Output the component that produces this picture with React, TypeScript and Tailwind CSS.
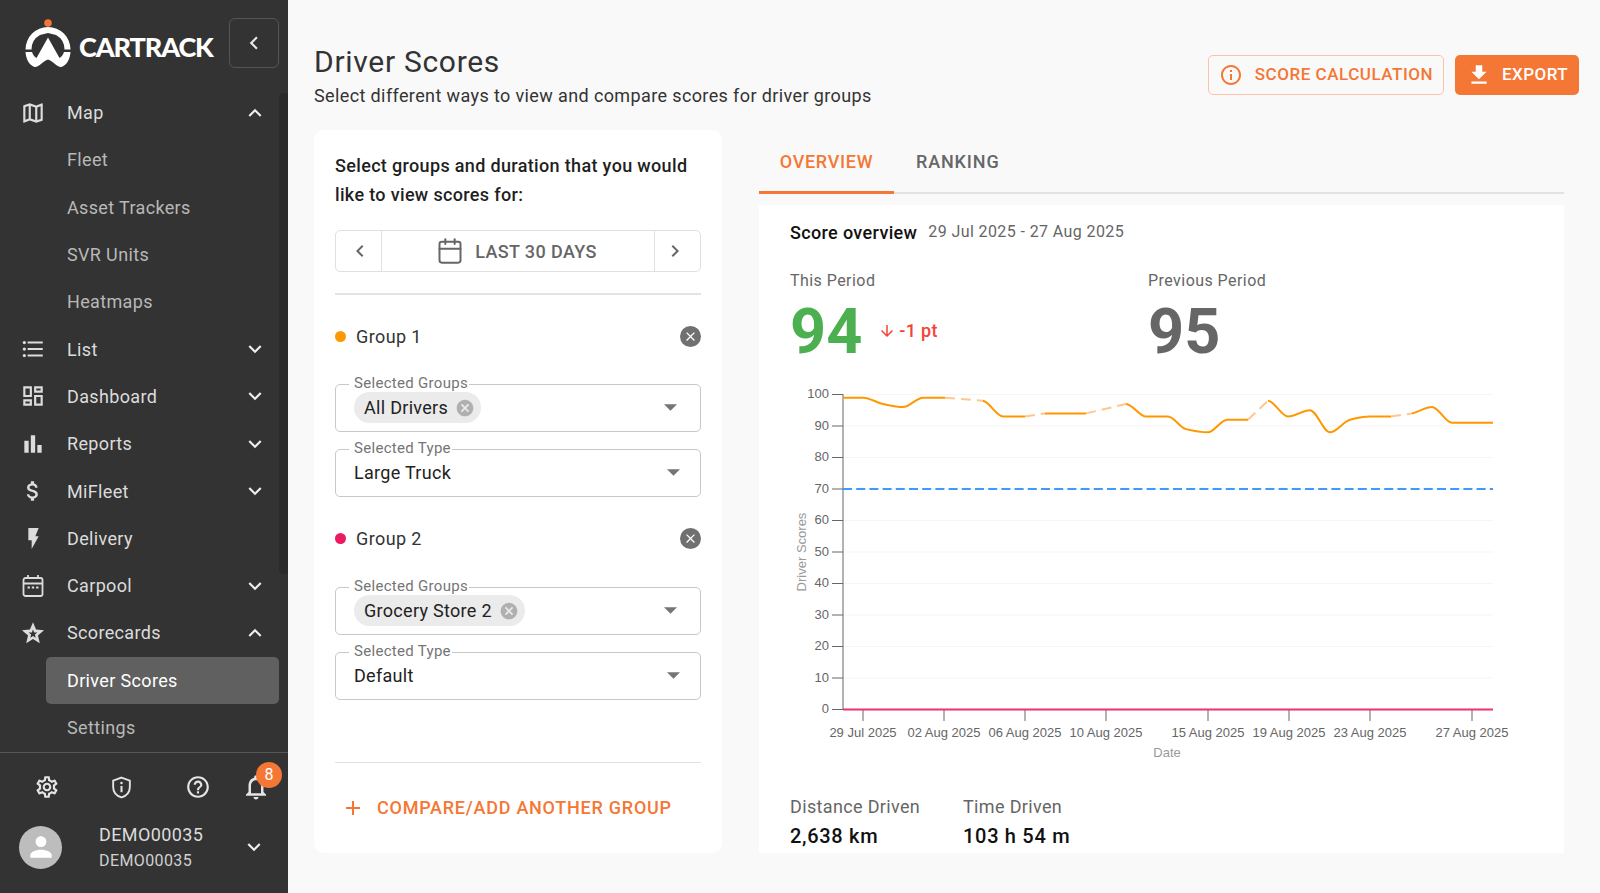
import React from "react";
import {
  MdOutlineMap, MdFormatListBulleted, MdOutlineDashboard, MdBarChart, MdAttachMoney,
  MdExpandMore, MdExpandLess, MdOutlineSettings, MdHelpOutline, MdOutlineNotifications, MdPerson,
  MdChevronLeft, MdChevronRight, MdCancel, MdFileDownload, MdInfoOutline, MdClose, MdAdd, MdArrowDownward,
} from "react-icons/md";
import { Calendar } from "lucide-react";

const Bolt = () => (
  <svg viewBox="0 0 31 63" className="w-[11px] h-[21px]" fill="currentColor"><path d="M0 0H31L21 25H31L10 63V37H0Z" /></svg>
);

const CalIcon = () => (
  <svg viewBox="0 0 24 24" className="w-[24px] h-[24px]" fill="none" stroke="currentColor" strokeWidth="1.8">
    <rect x="2.5" y="4" width="19" height="18" rx="2" />
    <path d="M7 1v4M17 1v4M2.5 9.5h19" />
    <path d="M6.5 13.5h2.4M10.8 13.5h2.4M15.1 13.5h2.4" strokeWidth="2" />
  </svg>
);

function starPts(cx: number, cy: number, r1: number, r2: number) {
  let d = "";
  for (let i = 0; i < 10; i++) {
    const r = i % 2 === 0 ? r1 : r2;
    const a = -Math.PI / 2 + (i * Math.PI) / 5;
    d += `${i === 0 ? "M" : "L"}${(cx + r * Math.cos(a)).toFixed(2)} ${(cy + r * Math.sin(a)).toFixed(2)}`;
  }
  return d + "Z";
}
const StarIcon = () => (
  <svg viewBox="0 0 24 24" className="w-[24px] h-[24px]" fill="currentColor">
    <path fillRule="evenodd" d={starPts(12, 12.8, 11.6, 5.2) + starPts(12, 13, 4.6, 2)} />
  </svg>
);

const Shield = ({ className = "" }: { className?: string }) => (
  <svg viewBox="0 0 24 24" className={className} fill="none" stroke="currentColor" strokeWidth="1.8">
    <path d="M12 2.5l8 3v6c0 5-3.4 8.6-8 10-4.6-1.4-8-5-8-10v-6z" />
    <path d="M12 10.5v6" strokeWidth="2" />
    <circle cx="12" cy="7.6" r="1.2" fill="currentColor" stroke="none" />
  </svg>
);

const Logo = () => (
  <svg viewBox="20 15 56 56" className="w-[56px] h-[56px] shrink-0" fill="#fff">
    <circle cx="48" cy="23" r="3.8" fill="#f47735" />
    <path d="M25.5 49.5A22.5 22.5 0 0 1 70.5 49.5H64.5A16.5 16.5 0 0 0 56 35L48 33L40 35A16.5 16.5 0 0 0 31.5 49.5Z" />
    <path d="M25.5 52H32C33 55 34.5 57 36.5 58L48 37.5L59.5 58C61.5 57 63 55 64 52H70.5C70 59 67 65 61.5 67C57 67.5 53 61 48 59.5C43 61 39 67.5 34.5 67C29 65 26 59 25.5 52Z" />
  </svg>
);

type NavItem = { label: string; icon?: React.ReactNode; chev?: "up" | "down"; active?: boolean };
const iconCls = "w-[26px] h-[26px]";
const nav: NavItem[] = [
  { label: "Map", icon: <MdOutlineMap className={iconCls} />, chev: "up" },
  { label: "Fleet" },
  { label: "Asset Trackers" },
  { label: "SVR Units" },
  { label: "Heatmaps" },
  { label: "List", icon: <MdFormatListBulleted className={iconCls} />, chev: "down" },
  { label: "Dashboard", icon: <MdOutlineDashboard className={iconCls} />, chev: "down" },
  { label: "Reports", icon: <MdBarChart className={iconCls} />, chev: "down" },
  { label: "MiFleet", icon: <MdAttachMoney className={iconCls} />, chev: "down" },
  { label: "Delivery", icon: <Bolt /> },
  { label: "Carpool", icon: <CalIcon />, chev: "down" },
  { label: "Scorecards", icon: <StarIcon />, chev: "up" },
  { label: "Driver Scores", active: true },
  { label: "Settings" },
];

const Sidebar = () => (
  <aside className="relative w-[288px] shrink-0 h-full bg-[#333333] flex flex-col text-[#e0e0e0]">
    <div className="h-[89px] shrink-0 flex items-start">
      <div className="ml-[20px] mt-[15px]"><Logo /></div>
      <span className="ml-[3px] mt-[29px] text-[27px] leading-[36px] font-black text-white tracking-[-1.1px] font-['Lato',sans-serif]">CARTRACK</span>
      <button className="ml-[16px] mt-[18px] w-[50px] h-[50px] shrink-0 rounded-[6px] border-[1.5px] border-[#555] flex items-center justify-center text-[#e8e8e8]">
        <MdChevronLeft className="w-[26px] h-[26px]" />
      </button>
    </div>
    <nav className="flex-1">
      {nav.map((it) =>
        it.icon ? (
          <div key={it.label} className="h-[47.3px] flex items-center text-[#dcdcdc]">
            <div className="w-[67px] pl-[20px] pr-[21px] flex justify-center shrink-0">{it.icon}</div>
            <span className="text-[18px] tracking-[0.35px] flex-1">{it.label}</span>
            {it.chev === "up" && <MdExpandLess className="w-[26px] h-[26px] mr-[20px] text-[#eee]" />}
            {it.chev === "down" && <MdExpandMore className="w-[26px] h-[26px] mr-[20px] text-[#eee]" />}
          </div>
        ) : (
          <div key={it.label} className={`h-[47.3px] ml-[46px] mr-[9px] pl-[21px] flex items-center rounded-[5px] text-[18px] tracking-[0.35px] ${it.active ? "bg-[#606060] text-white" : "text-[#b8b8b8]"}`}>
            {it.label}
          </div>
        )
      )}
    </nav>
    <div className="absolute right-0 top-[93px] w-[9px] h-[481px] rounded-[4px] bg-[#2b2b2b]" />
    <div className="h-[141px] shrink-0 border-t-[1.5px] border-[#565656]">
      <div className="relative h-[68px] flex items-center text-[#e4e4e4]">
        <div className="w-[93px] flex justify-center"><MdOutlineSettings className="w-[26px] h-[26px]" /></div>
        <div className="w-[57px] flex justify-center"><Shield className="w-[25px] h-[25px]" /></div>
        <div className="w-[96px] flex justify-center"><MdHelpOutline className="w-[26px] h-[26px]" /></div>
        <div className="w-[20px] flex justify-center"><MdOutlineNotifications className="w-[30px] h-[30px] shrink-0" /></div>
        <div className="absolute left-[256px] top-[9px] w-[26px] h-[26px] rounded-full bg-[#f47735] text-white text-[16px] flex items-center justify-center">8</div>
      </div>
      <div className="flex items-center pl-[19px] h-[52px]">
        <div className="w-[43px] h-[43px] rounded-full bg-[#bdbdbd] flex items-center justify-center text-white shrink-0">
          <MdPerson className="w-[32px] h-[32px]" />
        </div>
        <div className="ml-[37px] flex-1">
          <div className="text-[18px] leading-[26px] text-[#dcdcdc] tracking-[0.4px]">DEMO00035</div>
          <div className="text-[16px] leading-[24px] mt-[1px] text-[#d0d0d0] tracking-[0.4px]">DEMO00035</div>
        </div>
        <MdExpandMore className="w-[26px] h-[26px] mr-[21px] text-[#eee]" />
      </div>
    </div>
  </aside>
);

const Arrow = ({ chip }: { chip: boolean }) => (
  <svg viewBox="0 0 12 6" className={`w-[13px] h-[7px] ${chip ? "mr-[23px]" : "mr-[20px]"}`} fill="#757575"><path d="M0 0h12L6 6z" /></svg>
);

const Field = ({ label, chip, value }: { label: string; chip?: string; value?: string }) => (
  <div className="relative h-[48px] rounded-[5px] border-[1.5px] border-[#c8c8c8] flex items-center pl-[18px]">
    <span className="absolute left-[13px] -top-[11px] bg-white pl-[5px] pr-[1px] text-[15px] leading-[18px] text-[#757575] tracking-[0.3px]">{label}</span>
    <div className="flex-1 flex items-center">
      {chip ? (
        <div className="h-[31px] rounded-full bg-[#ebebeb] flex items-center pl-[10px] pr-[6px] text-[18px] text-[#222] tracking-[0.3px]">
          {chip}
          <MdCancel className="w-[20px] h-[20px] ml-[7px] text-[#b0b0b0]" />
        </div>
      ) : (
        <span className="text-[18px] text-[#222] tracking-[0.3px]">{value}</span>
      )}
    </div>
    <Arrow chip={!!chip} />
  </div>
);

const GroupRow = ({ label, dot }: { label: string; dot: string }) => (
  <div className="h-[40px] flex items-center">
    <span className={`w-[11px] h-[11px] rounded-full ${dot}`} />
    <span className="ml-[10px] flex-1 text-[18px] text-[#333] tracking-[0.4px] -mt-[1px]">{label}</span>
    <span className="w-[21px] h-[21px] rounded-full bg-[#707070] flex items-center justify-center text-white"><MdClose className="w-[15px] h-[15px]" /></span>
  </div>
);

const LeftCard = () => (
  <section className="w-[408px] shrink-0 bg-white rounded-[10px] px-[21px] pt-[21px]">
    <p className="text-[18px] leading-[29px] font-medium text-[#1f1f1f] tracking-[0.34px]">Select groups and duration that you would like to view scores for:</p>
    <div className="mt-[21px] h-[42px] border-[1.5px] border-[#e0e0e0] rounded-[5px] flex items-center text-[#666]">
      <div className="w-[46px] h-full flex items-center justify-center pl-[3px] border-r-[1.5px] border-[#e0e0e0]"><MdChevronLeft className="w-[24px] h-[24px]" /></div>
      <div className="flex-1 flex items-center justify-center gap-[11px] pr-[3px] text-[18px] font-medium tracking-[0.4px]">
        <Calendar className="w-[28px] h-[28px]" strokeWidth={1.7} />
        LAST 30 DAYS
      </div>
      <div className="w-[46px] h-full flex items-center justify-center pr-[5px] border-l-[1.5px] border-[#e0e0e0]"><MdChevronRight className="w-[24px] h-[24px]" /></div>
    </div>
    <div className="mt-[21px] h-[1.5px] bg-[#e4e4e4]" />
    <div className="mt-[22px]"><GroupRow label="Group 1" dot="bg-[#ff9800]" /></div>
    <div className="mt-[27px]"><Field label="Selected Groups" chip="All Drivers" /></div>
    <div className="mt-[17px]"><Field label="Selected Type" value="Large Truck" /></div>
    <div className="mt-[22px]"><GroupRow label="Group 2" dot="bg-[#ec1a62]" /></div>
    <div className="mt-[28px]"><Field label="Selected Groups" chip="Grocery Store 2" /></div>
    <div className="mt-[17px]"><Field label="Selected Type" value="Default" /></div>
    <div className="mt-[62px] h-[1px] bg-[#e0e0e0]" />
    <div className="mt-[25px] h-[40px] flex items-center text-[#f47735] pl-[7px]">
      <MdAdd className="w-[24px] h-[24px] -ml-[1px]" />
      <span className="ml-[12px] text-[18px] font-medium tracking-[0.75px]">COMPARE/ADD ANOTHER GROUP</span>
    </div>
  </section>
);

type P = [number, number];
const pts: P[] = [
  [843, 99], [863, 99], [883, 97], [903, 96], [923, 99], [945, 99], [983, 98], [1003, 93], [1025, 93], [1045, 94], [1086, 94],
  [1126, 97], [1146, 93], [1168, 93], [1186, 89], [1208, 88], [1227, 92], [1248, 92], [1268, 98], [1288, 93], [1310, 95],
  [1330, 88], [1350, 92], [1370, 93], [1391, 93], [1412, 94], [1432, 96], [1452, 91], [1493, 91],
];
const dashedStart = new Set([5, 8, 10, 17, 24]);
const Y = (v: number) => 709.5 - v * 3.15;

function buildPaths() {
  const n = pts.length;
  const xy = pts.map(([x, v]) => [x, Y(v)]);
  const s: number[] = [];
  for (let i = 0; i < n - 1; i++) s.push((xy[i + 1][1] - xy[i][1]) / (xy[i + 1][0] - xy[i][0]));
  const t: number[] = [];
  for (let i = 0; i < n; i++) {
    if (i === 0) t.push(s[0]);
    else if (i === n - 1) t.push(s[n - 2]);
    else if (s[i - 1] * s[i] <= 0) t.push(0);
    else t.push((2 * s[i - 1] * s[i]) / (s[i - 1] + s[i]));
  }
  let solid = "";
  const dashed: string[] = [];
  for (let i = 0; i < n - 1; i++) {
    const [x0, y0] = xy[i];
    const [x1, y1] = xy[i + 1];
    if (dashedStart.has(i)) {
      dashed.push(`M${x0} ${y0}L${x1} ${y1}`);
    } else {
      const h = (x1 - x0) / 3;
      solid += `M${x0} ${y0}C${x0 + h} ${y0 + t[i] * h} ${x1 - h} ${y1 - t[i + 1] * h} ${x1} ${y1}`;
    }
  }
  return { solid, dashed: dashed.join("") };
}
const paths = buildPaths();

const xTicks: [number, string][] = [
  [863, "29 Jul 2025"], [944, "02 Aug 2025"], [1025, "06 Aug 2025"], [1106, "10 Aug 2025"],
  [1208, "15 Aug 2025"], [1289, "19 Aug 2025"], [1370, "23 Aug 2025"], [1472, "27 Aug 2025"],
];

const Chart = () => (
  <svg viewBox="780 380 780 385" className="w-[780px] h-[385px] block -ml-[10px]" style={{ fontFamily: "'Liberation Sans', sans-serif" }}>
    {[10, 20, 30, 40, 50, 60, 70, 80, 90, 100].map((v) => (
      <line key={v} x1="843" x2="1493" y1={Y(v)} y2={Y(v)} stroke="#f5f5f5" />
    ))}
    {[0, 10, 20, 30, 40, 50, 60, 70, 80, 90, 100].map((v) => (
      <g key={v}>
        <line x1="832" x2="843" y1={Y(v)} y2={Y(v)} stroke="#666" strokeWidth="1" />
        <text x="829" y={Y(v) + 3.6} textAnchor="end" fontSize="13" fill="#666">{v}</text>
      </g>
    ))}
    <line x1="843" x2="843" y1="394" y2="710" stroke="#666" strokeWidth="1" />
    {xTicks.map(([x, l]) => (
      <g key={l}>
        <line x1={x} x2={x} y1="710" y2="721" stroke="#666" strokeWidth="1" />
        <text x={x} y="737" textAnchor="middle" fontSize="13" fill="#666">{l}</text>
      </g>
    ))}
    <text x="1167" y="757" textAnchor="middle" fontSize="13" fill="#999">Date</text>
    <text transform="translate(806 552) rotate(-90)" textAnchor="middle" fontSize="13" fill="#999">Driver Scores</text>
    <line x1="843" x2="1493" y1="489" y2="489" stroke="#3d9bff" strokeWidth="2.2" strokeDasharray="9 4.2" />
    <path d={paths.dashed} fill="none" stroke="#ffc78f" strokeWidth="2" strokeDasharray="10 6" />
    <path d={paths.solid} fill="none" stroke="#ff9800" strokeWidth="2" />
    <line x1="843" x2="1493" y1="709.5" y2="709.5" stroke="#f0306f" strokeWidth="2" />
  </svg>
);

const RightPanel = () => (
  <section className="flex-1 min-w-0 px-[15px] flex flex-col">
    <div className="h-[64px] shrink-0 border-b-[2px] border-[#e2e2e2] flex">
      <div className="w-[135px] h-[64px] pt-[2px] border-b-[3px] border-[#f47735] flex items-center justify-center text-[18px] font-medium text-[#f47735] tracking-[0.7px]">OVERVIEW</div>
      <div className="ml-[22px] h-[62px] flex items-center text-[18px] font-medium text-[#666] tracking-[0.85px]">RANKING</div>
    </div>
    <div className="mt-[11px] flex-1 min-h-0 bg-white overflow-hidden pl-[31px] pt-[15px]">
      <div className="h-[24px] flex items-center">
        <span className="text-[18px] font-medium text-[#111] tracking-[0.35px]">Score overview</span>
        <span className="ml-[11px] text-[16px] text-[#666] tracking-[0.4px]">29 Jul 2025 - 27 Aug 2025</span>
      </div>
      <div className="mt-[26px] flex">
        <div className="w-[358px]">
          <div className="h-[22px] flex items-center text-[16px] text-[#666] tracking-[0.45px]">This Period</div>
          <div className="mt-[7px] h-[64px] flex items-center">
            <span className="pt-[2px] text-[63px] leading-[64px] font-bold text-[#4caf50]">94</span>
            <MdArrowDownward className="ml-[16px] w-[18px] h-[18px] text-[#f44336]" />
            <span className="ml-[3px] -mt-[1px] text-[18px] font-medium text-[#f44336] tracking-[0.3px]">-1 pt</span>
          </div>
        </div>
        <div>
          <div className="h-[22px] flex items-center text-[16px] text-[#666] tracking-[0.45px]">Previous Period</div>
          <div className="mt-[7px] h-[64px] pt-[2px] flex items-center text-[63px] leading-[64px] font-bold text-[#666]">95</div>
        </div>
      </div>
      <div className="mt-[17px]"><Chart /></div>
      <div className="mt-[29px] flex">
        <div className="w-[173px]">
          <div className="h-[24px] flex items-center text-[18px] text-[#666] tracking-[0.35px]">Distance Driven</div>
          <div className="mt-[4px] h-[28px] flex items-center text-[20px] font-medium text-[#111] tracking-[0.7px]">2,638 km</div>
        </div>
        <div>
          <div className="h-[24px] flex items-center text-[18px] text-[#666] tracking-[0.35px]">Time Driven</div>
          <div className="mt-[4px] h-[28px] flex items-center text-[20px] font-medium text-[#111] tracking-[0.7px]">103 h 54 m</div>
        </div>
      </div>
    </div>
  </section>
);

export default function App() {
  return (
    <div className="w-[1600px] h-[893px] overflow-hidden flex bg-[#f9f9f9] font-['Roboto',sans-serif]">
      <Sidebar />
      <main className="flex-1 min-w-0 pl-[26px] pr-[21px] flex flex-col">
        <header className="h-[130px] shrink-0 pt-[44px] flex items-start">
          <div className="flex-1">
            <h1 className="text-[30px] leading-[36px] text-[#333] tracking-[0.7px]">Driver Scores</h1>
            <p className="mt-[2px] text-[18px] leading-[28px] text-[#333] tracking-[0.38px]">Select different ways to view and compare scores for driver groups</p>
          </div>
          <div className="mt-[11px] flex gap-[11px]">
            <button className="w-[236px] h-[40px] rounded-[5px] border-[1.5px] border-[#fbc4a6] flex items-center justify-center text-[#f47735] text-[17px] font-medium tracking-[0.53px]">
              <MdInfoOutline className="w-[24px] h-[24px] mr-[12px]" />SCORE CALCULATION
            </button>
            <button className="w-[124px] h-[40px] rounded-[5px] bg-[#f47735] flex items-center justify-center text-white text-[17px] font-medium tracking-[0.47px]">
              <MdFileDownload className="w-[26px] h-[26px] mr-[10px]" />EXPORT
            </button>
          </div>
        </header>
        <div className="h-[723px] shrink-0 flex gap-[22px]">
          <LeftCard />
          <RightPanel />
        </div>
      </main>
    </div>
  );
}
